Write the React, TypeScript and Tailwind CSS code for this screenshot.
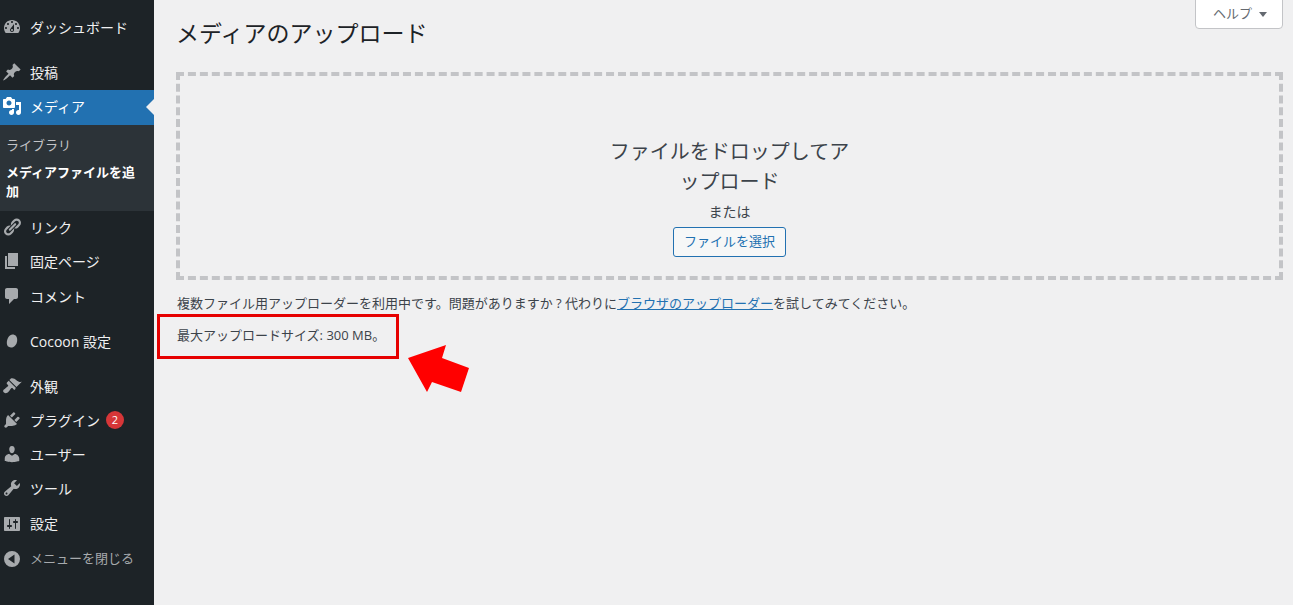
const P: Record<string, string> = {
  dashboard: "M3.76 16h12.48c1.1-1.37 1.76-3.11 1.76-5 0-4.42-3.58-8-8-8s-8 3.58-8 8c0 1.89.66 3.63 1.76 5zM10 4c.55 0 1 .45 1 1s-.45 1-1 1-1-.45-1-1 .45-1 1-1zM6 6c.55 0 1 .45 1 1s-.45 1-1 1-1-.45-1-1 .45-1 1-1zm8 0c.55 0 1 .45 1 1s-.45 1-1 1-1-.45-1-1 .45-1 1-1zm-5.37 5.55L12 7v6c0 1.1-.9 2-2 2s-2-.9-2-2c0-.57.24-1.08.63-1.45zM4 10c.55 0 1 .45 1 1s-.45 1-1 1-1-.45-1-1 .45-1 1-1zm12 0c.55 0 1 .45 1 1s-.45 1-1 1-1-.45-1-1 .45-1 1-1zm-5 3c0-.55-.45-1-1-1s-1 .45-1 1 .45 1 1 1 1-.45 1-1z",
  post: "M10.44 3.02l1.82-1.82 6.36 6.35-1.83 1.82c-1.05-.68-2.48-.57-3.41.36l-.75.75c-.92.93-1.04 2.35-.35 3.41l-1.83 1.82-2.41-2.41-2.8 2.79c-.42.42-3.38 2.71-3.8 2.29s1.86-3.39 2.28-3.81l2.79-2.79L4.1 9.36l1.83-1.82c1.05.69 2.48.57 3.4-.36l.75-.75c.93-.92 1.05-2.35.36-3.41z",
  media: "M13 11V4c0-.55-.45-1-1-1h-1.67L9 1H5L3.67 3H2c-.55 0-1 .45-1 1v7c0 .55.45 1 1 1h10c.55 0 1-.45 1-1zM7 4.5c1.38 0 2.5 1.12 2.5 2.5S8.38 9.5 7 9.5 4.5 8.38 4.5 7 5.62 4.5 7 4.5zM14 6h5v10.5c0 1.38-1.12 2.5-2.5 2.5S14 17.88 14 16.5s1.12-2.5 2.5-2.5c.17 0 .34.02.5.05V9h-3V6zm-4 8.05V13h2v3.5c0 1.38-1.12 2.5-2.5 2.5S7 17.88 7 16.5 8.12 14 9.5 14c.17 0 .34.02.5.05z",
  links: "M17.74 2.76c1.68 1.69 1.68 4.41 0 6.1l-1.53 1.52c-1.12 1.12-2.7 1.47-4.14 1.09l2.62-2.61.76-.77.76-.76c.84-.84.84-2.2 0-3.04-.84-.85-2.2-.85-3.04 0l-.77.76-3.38 3.38c-.37-1.44-.02-3.02 1.1-4.14l1.52-1.53c1.69-1.68 4.42-1.68 6.1 0zM8.59 13.43l5.34-5.34c.42-.42.42-1.1 0-1.52-.44-.43-1.13-.39-1.53 0l-5.33 5.34c-.42.42-.42 1.1 0 1.52.44.43 1.13.39 1.52 0zm-.76 2.29l4.14-4.15c.38 1.44.03 3.02-1.09 4.14l-1.52 1.53c-1.69 1.68-4.41 1.68-6.1 0-1.68-1.68-1.68-4.42 0-6.1l1.53-1.52c1.12-1.12 2.7-1.47 4.14-1.1l-4.14 4.15c-.85.84-.85 2.2 0 3.05.84.84 2.2.84 3.04 0z",
  page: "M6 15V2h10v13H6zm-1 1h8v2H3V5h2v11z",
  comments: "M5 2h9c1.1 0 2 .9 2 2v7c0 1.1-.9 2-2 2h-2l-5 5v-5H5c-1.1 0-2-.9-2-2V4c0-1.1.9-2 2-2z",
  cocoon: "M10.5 3.5c3 0 4.7 2.2 4.7 5.4 0 4-2.7 7.6-6.3 7.6-2.7 0-4.1-1.9-4.1-4.7 0-4.100 2.600-8.300 5.700-8.300z",
  appearance: "M14.48 11.06L7.41 3.99l1.5-1.5c.5-.56 2.3-.47 3.51.32 1.21.8 1.43 1.28 2.91 2.1 1.18.64 2.45 1.26 4.45.85zm-.71.71L6.7 4.7 4.93 6.47c-.39.39-.39 1.02 0 1.41l1.06 1.06c.39.39.39 1.03 0 1.42-.6.6-1.43 1.11-2.21 1.69-.35.26-.7.53-1.01.84C1.43 13.23.4 14.98 2 16.5c1.57 1.57 3.4.4 4.72-.95.3-.3.56-.65.82-1 .58-.78 1.08-1.61 1.69-2.21.39-.39 1.02-.39 1.41 0l1.06 1.06c.39.39 1.02.39 1.41 0z",
  plugins: "M13.11 4.36L9.87 7.6 8 5.73l3.24-3.24c.35-.34 1.05-.2 1.56.32.52.51.66 1.21.31 1.55zm-8 1.77l.91-1.12 9.01 9.01-1.19.84c-.71.71-2.63 1.16-3.82 1.16H6.14L4.9 17.26c-.59.59-1.54.59-2.12 0-.59-.58-.59-1.53 0-2.12l1.24-1.24v-3.88c0-1.13.4-3.19 1.09-3.89zm7.26 3.97l3.24-3.24c.34-.35 1.04-.21 1.55.31.52.51.66 1.21.31 1.55l-3.24 3.25z",
  users: "M10 9.25c-2.27 0-2.73-3.44-2.73-3.44C7 4.02 7.82 2 9.97 2c2.16 0 2.98 2.02 2.71 3.81 0 0-.41 3.44-2.68 3.44zm0 2.57L12.72 10c2.39 0 4.52 2.33 4.52 4.53v2.49s-3.65 1.13-7.24 1.13c-3.65 0-7.24-1.13-7.24-1.13v-2.49c0-2.25 1.94-4.48 4.47-4.48z",
  tools: "M16.68 9.77c-1.34 1.34-3.3 1.67-4.95.99l-5.41 6.52c-.99.99-2.59.99-3.58 0s-.99-2.59 0-3.57l6.52-5.42c-.68-1.65-.35-3.61.99-4.95 1.28-1.28 3.12-1.62 4.72-1.06l-2.89 2.89 2.82 2.82 2.86-2.87c.53 1.58.18 3.39-1.08 4.65zM3.81 16.21c.4.39 1.04.39 1.43 0 .4-.4.4-1.04 0-1.43-.39-.4-1.03-.4-1.43 0-.39.39-.39 1.03 0 1.43z",
  settings: "M18 16V4c0-.55-.45-1-1-1H3c-.55 0-1 .45-1 1v12c0 .55.45 1 1 1h14c.55 0 1-.45 1-1zM8 11h1c.55 0 1 .45 1 1s-.45 1-1 1H8v1.5c0 .28-.22.5-.5.5s-.5-.22-.5-.5V13H6c-.55 0-1-.45-1-1s.45-1 1-1h1V5.5c0-.28.22-.5.5-.5s.5.22.5.5V11zm5-2h-1c-.55 0-1-.45-1-1s.45-1 1-1h1V5.5c0-.28.22-.5.5-.5s.5.22.5.5V7h1c.55 0 1 .45 1 1s-.45 1-1 1h-1v5.5c0 .28-.22.5-.5.5s-.5-.22-.5-.5V9z",
  collapse: "M10 2a8 8 0 1 0 0 16 8 8 0 0 0 0-16zm2.500 3.500v9L6 10z",
};

function Row({ icon, label, cur, dim, badge, size = "h-[34px] pb-[2px]" }: { icon: string; label: string; cur?: boolean; dim?: boolean; badge?: string; size?: string }) {
  return (
    <div className={`relative flex items-center ${size} ${cur ? "bg-[#2271b1] text-[14px] text-white" : dim ? "text-[13px] text-[#a7aaad]" : "text-[14px] text-[#f0f0f1]"}`}>
      <div className="flex w-[30px] shrink-0 justify-start pl-[2px]">
        <svg viewBox="0 0 20 20" className={`h-5 w-5 ${cur ? "fill-white" : "fill-[#a7aaad]"}`}>
          <path d={P[icon]} fillRule="evenodd" />
        </svg>
      </div>
      <span className="whitespace-nowrap">{label}</span>
      {badge && (
        <span className="ml-[6px] flex h-[18px] w-[18px] items-center justify-center rounded-full bg-[#d63638] text-[11px] text-white">{badge}</span>
      )}
      {cur && <span className="absolute right-0 top-[9px] h-0 w-0 border-y-[8px] border-r-[8px] border-y-transparent border-r-[#f0f0f1]" />}
    </div>
  );
}

export default function App() {
  return (
    <div
      className="relative flex h-[605px] w-[1293px] overflow-hidden bg-[#f0f0f1] text-[13px] text-[#3c434a]"
      style={{ fontFamily: '"Open Sans", "Noto Sans CJK JP", sans-serif' }}
    >
      <aside className="flex w-[154px] shrink-0 flex-col bg-[#1d2327] pt-[11px]">
        <Row icon="dashboard" label="ダッシュボード" />
        <div className="h-[11px]" />
        <Row icon="post" label="投稿" />
        <Row icon="media" label="メディア" cur size="h-[35px] pb-[3px]" />
        <div className="flex h-[86px] flex-col bg-[#2c3338] px-[6px] pt-[9px] text-[13px]">
          <div className="h-[24px] leading-[22px] text-[#c3c4c7]">ライブラリ</div>
          <div className="mt-[5px] font-bold leading-[19px] text-white">
            メディアファイルを追
            <br />
            加
          </div>
        </div>
        <Row icon="links" label="リンク" />
        <Row icon="page" label="固定ページ" size="h-[35px] pb-[3px]" />
        <Row icon="comments" label="コメント" />
        <div className="h-[11px]" />
        <Row icon="cocoon" label="Cocoon 設定" />
        <div className="h-[11px]" />
        <Row icon="appearance" label="外観" />
        <Row icon="plugins" label="プラグイン" badge="2" />
        <Row icon="users" label="ユーザー" />
        <Row icon="tools" label="ツール" />
        <Row icon="settings" label="設定" size="h-[35px]" />
        <Row icon="collapse" label="メニューを閉じる" dim size="h-[35px]" />
      </aside>

      <main className="relative flex min-w-0 flex-1 flex-col pl-[22px] pr-[10px]">
        <div className="absolute right-[10px] top-[-1px] flex h-[30px] w-[88px] items-center justify-center gap-[7px] rounded-b-[4px] border border-[#c3c4c7] bg-white pl-[2px] text-[13px] text-[#646970]">
          <span>ヘルプ</span>
          <span className="h-0 w-0 border-x-[4.5px] border-t-[5px] border-x-transparent border-t-[#646970]" />
        </div>
        <h1 className="mt-[17px] h-[32px] text-[23px] font-normal leading-[32px] text-[#1d2327]">メディアのアップロード</h1>
        <div className="mt-[23px] flex h-[208px] flex-col items-center border-4 border-dashed border-[#c3c4c7] pt-[61px]">
          <div className="text-center text-[20px] leading-[30px]">
            ファイルをドロップしてア
            <br />
            ップロード
          </div>
          <div className="mt-[5px] h-[20px] text-[14px] leading-[20px]">または</div>
          <button className="mt-[5px] flex h-[30px] w-[113px] items-center justify-center rounded-[3px] border border-[#2271b1] bg-[#f6f7f7] text-[13px] text-[#2271b1]">
            ファイルを選択
          </button>
        </div>
        <p className="ml-[1px] mt-[13px] leading-[20px]">
          複数ファイル用アップローダーを利用中です。問題がありますか ? 代わりに
          <a className="text-[#2271b1] underline">ブラウザのアップローダー</a>
          を試してみてください。
        </p>
        <p className="ml-[1px] mt-[12px] leading-[20px]">最大アップロードサイズ: 300 MB。</p>
      </main>

      <div className="absolute left-[157px] top-[314px] h-[45px] w-[242px] border-[3.5px] border-[#e60000]" />
      <svg className="absolute left-[400px] top-[340px]" width="80" height="60" viewBox="0 0 80 60">
        <polygon points="8,18 46,5 42,18 69,28 61,52 32,42 27,52" fill="#ff0000" />
      </svg>
    </div>
  );
}
